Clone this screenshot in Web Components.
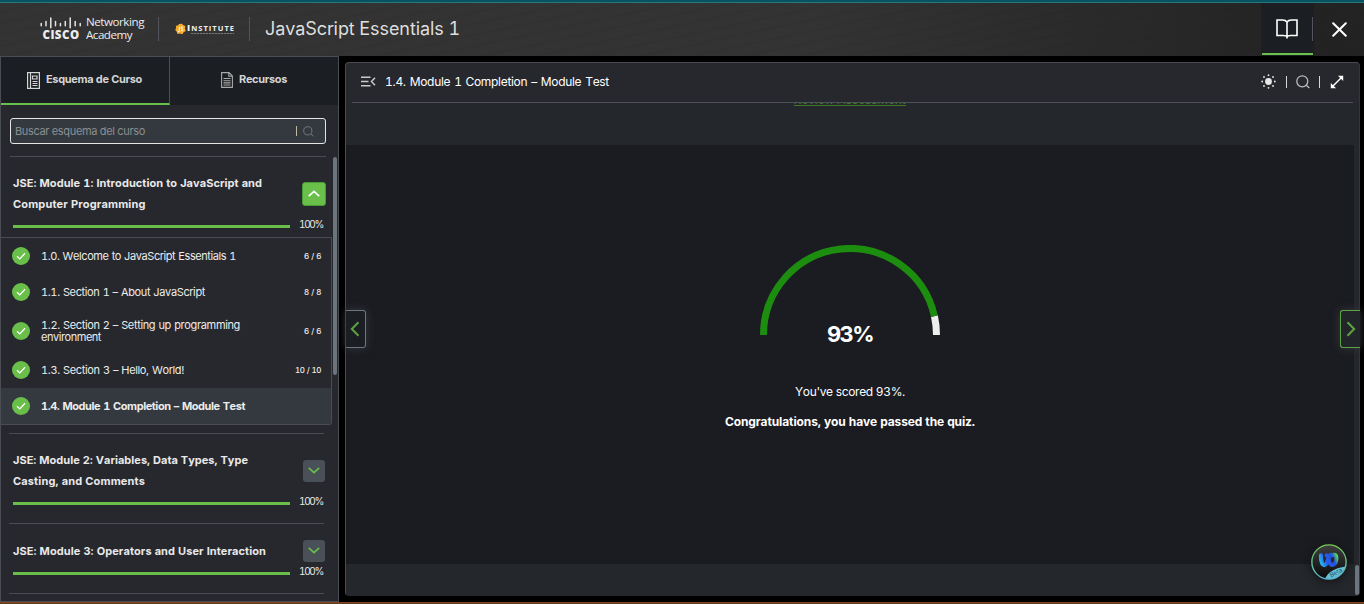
<!DOCTYPE html>
<html lang="es">
<head>
<meta charset="utf-8">
<title>JavaScript Essentials 1</title>
<style>
html,body{margin:0;height:100%;background:#000;overflow:hidden}
body{font-family:Inter,"Liberation Sans",sans-serif;color:#e8e8e8}
</style>
</head>
<body>
<course-app></course-app>
<script>
function define(name, html, setup) {
  const t = document.createElement('template');
  t.innerHTML = '<style>*{box-sizing:border-box}svg{display:block;flex:none}</style>' + html;
  customElements.define(name, class extends HTMLElement {
    connectedCallback() {
      if (this.shadowRoot) return;
      this.attachShadow({mode: 'open'}).append(t.content.cloneNode(true));
      if (setup) setup(this, this.shadowRoot);
    }
  });
}

/* A run of text tracked to occupy a given measure. */
define('fit-text', `<style>:host{display:inline-block;white-space:nowrap}span{display:inline-block;font-variant-numeric:tabular-nums;font-kerning:none}</style><span><slot></slot></span>`,
  (el, root) => {
    const s = root.querySelector('span');
    const w = +el.getAttribute('w'), n = el.textContent.length;
    const d = (w - s.getBoundingClientRect().width) / n;
    s.style.letterSpacing = d.toFixed(3) + 'px';
  });

define('brand-cisco', `<style>
:host{display:flex;align-items:center;gap:4px;color:#ececec}
.mark{width:42px;display:flex;flex-direction:column;align-items:center}
.c{font:800 11.5px/11px "Open Sans",sans-serif;margin-top:0;display:flex;height:12px}
.n{font:400 11.6px/12.5px "Open Sans","Noto Sans",sans-serif}
.n fit-text{display:block}
</style>
<div class="mark"><svg width="42" height="12" viewBox="0 0 42 12" stroke="#e6e6e6" stroke-width="1.5" stroke-linecap="round"><path d="M1.2 6.6v2.2M6 4.6v4.2M10.8 1v9.8M15.5 4.6v4.2M20.4 6.6v2.2M25.3 4.6v4.2M30.2 1v9.8M35.2 4.6v4.2M40.2 6.6v2.2"/></svg>
<div class="c"><fit-text w="37">CISCO</fit-text></div></div>
<div class="n"><fit-text w="58">Networking</fit-text><fit-text w="46">Academy</fit-text></div>`);

define('brand-js', `<style>
:host{display:flex;align-items:center;gap:1px;color:#f1f1f1}
.t{font:700 7.5px/8px "Open Sans",sans-serif;padding-top:1px}
.t b{font-size:9px}
.u{height:1px;margin:1px 0 0 4px;width:43px;background:repeating-linear-gradient(90deg,#777 0 2px,#4b4b4b 2px 3px)}
</style>
<svg width="11" height="12" viewBox="0 0 11 12"><path d="M4 1 7 .8 8 2 10.3 3 10 5.5 10.8 8 8.6 9.2 7.4 11.2 5 10.5 2.5 11 1.8 8.8.2 7 1.2 5 .8 2.8 3 2.6z" fill="#f9ad2b"/><path d="M4.4 3.7v4.1q0 1-1.5.8M8 4.2q-2-.7-2 .7 0 .8 1 1 1.2.3 1 1.3-.3 1-2 .5" fill="none" stroke="#fff" stroke-width=".9"/></svg>
<div><div class="t"><fit-text w="48"><b>I</b>NSTITUTE</fit-text></div><div class="u"></div></div>`);

define('top-bar', `<style>
:host{display:flex;height:56px;align-items:stretch;border-top:2px solid #06545f;background:linear-gradient(#2c7480 0 1px,transparent 1px),repeating-linear-gradient(168deg,transparent 0 9px,rgba(0,0,0,.035) 9px 11px),linear-gradient(90deg,#333 0,#333 60%,#232323 96%)}
.left{display:flex;align-items:center;flex:1;padding:0 0 1px 40px}
i{width:1px;height:24px;background:#53545c;flex:none}
brand-cisco{width:105px;margin-right:13px}
brand-js{width:59px;margin:0 15px 0 16px}
h1{margin:0 0 0 15px;font:400 18px/22px Inter,sans-serif;color:#dedede}
.book{width:53px;margin-top:1px;background:#1b1e22;display:flex;align-items:center;position:relative;padding-left:15px;padding-bottom:2px}
.book i{margin-left:14px;margin-top:1px}
.book::after{content:"";position:absolute;left:1px;right:1px;bottom:1px;height:2px;background:#6abf4b}
.x{width:50px;display:flex;align-items:center;padding-left:18px}
</style>
<div class="left"><brand-cisco></brand-cisco><i></i><brand-js></brand-js><i></i><h1><fit-text w="195">JavaScript Essentials 1</fit-text></h1></div>
<div class="book"><svg width="22" height="20" viewBox="0 0 22 20" fill="none" stroke="#fff" stroke-width="1.6"><path d="M11 3C10 1.5 8 1 6.5 1H1v15.5h6.5c1.800 0 3 .5 3.500 1.500.5-1 1.700-1.500 3.500-1.500H21V1h-5.500C14 1 12 1.500 11 3v16.500"/></svg><i></i></div>
<div class="x"><svg width="15" height="15" viewBox="0 0 15 15" stroke="#fff" stroke-width="2" stroke-linecap="round"><path d="M1.200 1.200l12.600 12.600M13.800 1.200 1.200 13.800"/></svg></div>`);

define('side-tabs', `<style>
:host{display:grid;grid-template-columns:169px 1fr;height:48px;background:#1b1e22;font:700 11px/14px Inter,sans-serif;color:#d4d4d4}
div{display:flex;align-items:center;gap:6px;padding-left:26px}
fit-text{padding-bottom:2px}
.a{border-right:1px solid #4c4f57;border-bottom:2px solid #6abf4b}
.b{padding-left:51px;padding-bottom:2px}
</style>
<div class="a"><svg width="13" height="17" viewBox="0 0 13 17" fill="none" stroke="#d6d6d6" stroke-width="1.200"><rect x=".6" y=".6" width="11.800" height="15.800"/><path d="M3.500.6v15.800M5.500 4h4.500v3H5.500zM5.500 9.500h5M5.500 11.500h5M5.500 13.500h5"/></svg><fit-text w="96">Esquema de Curso</fit-text></div>
<div class="b"><svg width="12" height="16" viewBox="0 0 12 16" fill="none" stroke="#aaa" stroke-width="1.100"><path d="M.6.6H8L11.400 4v11.400H.6zM7.800.6v3.600h3.600M2.500 6.500h7M2.500 8.700h7M2.500 10.900h7M2.500 13h7"/></svg><fit-text w="48">Recursos</fit-text></div>`);

define('search-box', `<style>
:host{display:flex;align-items:center;height:26px;border:1px solid #e4e4e4;border-radius:3px;background:#343940;padding:0 11px 0 4px;font:400 11px/14px Inter,sans-serif;color:#8b8e91}
span{flex:1}i{width:1px;height:10px;background:#bdb9a5;margin-right:6px}
</style><span><fit-text w="130">Buscar esquema del curso</fit-text></span><i></i><svg width="11" height="11" viewBox="0 0 11 11" fill="none" stroke="#74787c"><circle cx="4.800" cy="4.800" r="4.100"/><path d="M8 8l2.500 2.300"/></svg>`);

define('module-head', `<style>
:host{display:block;height:81px;border-top:1px solid #4a4c53;padding:16px 0 0 4px}
:host([short]){height:70px}
.r{display:grid;grid-template-columns:1fr 21px;height:42px;align-items:center}
:host([open]) .r{grid-template-columns:1fr 24px}
:host([short]) .r{height:22px}
.t{font:700 11px/21px Inter,sans-serif;color:#e9e9e9}
.btn{width:22px;height:22px;border-radius:3px;background:#495057;display:flex;align-items:center;justify-content:center;color:#6abf4b;margin:-1px 0 0}
:host([open]) .btn{width:24px;height:24px;background:#6abf4b;border:1px solid #479a35;color:#fff}
:host([open]) svg{transform:rotate(180deg)}
.p{display:flex;align-items:center;height:20px;font:400 10px/14px Inter,sans-serif;gap:9px;margin-top:-1px;padding-top:1px}
:host([short]) .p{height:20px;margin-top:0;padding-top:0}
.p fit-text{margin-top:-2px}
.bar{width:277px;height:3px;background:#6abf4b;margin-top:3px}
</style>
<div class="r"><div class="t"><slot></slot></div><div class="btn"><svg width="12" height="7" viewBox="0 0 12 7" fill="none" stroke="currentColor" stroke-width="1.600"><path d="M.8.8 6 5.600 11.200.8"/></svg></div></div>
<div class="p"><div class="bar"></div><fit-text w="24">100%</fit-text></div>`);

define('lesson-row', `<style>
:host{display:grid;grid-template-columns:29px 1fr auto;align-items:center;height:36px;padding:0 10px 0 11px;font:400 11px/12px Inter,sans-serif;color:#ececec;word-spacing:.6px}
:host([tall]){height:42px}
:host([on]){background:#343940;font-weight:700}
.n{font:500 8px/10px Inter,sans-serif}
</style>
<svg width="18" height="18" viewBox="0 0 18 18"><circle cx="9" cy="9" r="9" fill="#6abf4b"/><path d="M5 9.300 7.800 11.900 13 6.300" fill="none" stroke="#fff" stroke-width="1.300"/></svg>
<div><slot></slot></div><div class="n"><slot name="n"></slot></div>`);

define('side-bar', `<style>
:host{display:flex;flex-direction:column;border:1px solid #4a4c53;background:#27282d;height:546px;overflow:hidden}
side-tabs{flex:none}
search-box{margin:13px 12px 12px 9px;flex:none}
.s{display:flex;height:445px}
.l{width:332px}
module-head{margin:0 9px 0 8px}
module-head[open]{margin:0 7px 0 9px;padding-left:3px}
.g{border:1px solid #4a4c53;border-left:0;border-radius:0 0 3px 0;width:331px;height:188px;margin-bottom:8px;overflow:hidden}
.end{height:1px;background:#4a4c53;margin:0 9px 0 8px}
.bar{width:4px;height:218px;margin-top:1px;background:#6c757d;border-radius:3px}
</style>
<side-tabs></side-tabs><search-box></search-box>
<div class="s"><div class="l">
<module-head open><fit-text w="249">JSE: Module 1: Introduction to JavaScript and</fit-text><br><fit-text w="132.500">Computer Programming</fit-text></module-head>
<div class="g">
<lesson-row><fit-text w="195">1.0. Welcome to JavaScript Essentials 1</fit-text><fit-text slot="n" w="17">6 / 6</fit-text></lesson-row>
<lesson-row><fit-text w="164">1.1. Section 1 – About JavaScript</fit-text><fit-text slot="n" w="17">8 / 8</fit-text></lesson-row>
<lesson-row tall><fit-text w="199">1.2. Section 2 – Setting up programming</fit-text><br><fit-text w="60">environment</fit-text><fit-text slot="n" w="17">6 / 6</fit-text></lesson-row>
<lesson-row><fit-text w="143">1.3. Section 3 – Hello, World!</fit-text><fit-text slot="n" w="26">10 / 10</fit-text></lesson-row>
<lesson-row on><fit-text w="204">1.4. Module 1 Completion – Module Test</fit-text></lesson-row>
</div>
<module-head style="height:90px"><fit-text w="235">JSE: Module 2: Variables, Data Types, Type</fit-text><br><fit-text w="132">Casting, and Comments</fit-text></module-head>
<module-head short><fit-text w="253">JSE: Module 3: Operators and User Interaction</fit-text></module-head>
<div class="end"></div>
</div><div class="bar"></div></div>`);

define('panel-head', `<style>
:host{display:flex;align-items:center;height:40px;margin:0 6px;border-bottom:1px solid #4f5159;padding:0 9px 2px 9px;font:400 12px/16px Inter,sans-serif;color:#fff;word-spacing:1px}
.t{flex:1;margin-left:9px}i{width:1px;height:12px;background:#d6d6d6}
</style>
<svg width="15" height="11" viewBox="0 0 15 11" fill="none" stroke="#c9c9c9" stroke-width="1.500"><path d="M0 1.200h9.500M0 5.500h7.500M0 9.800h9.500M14 1.800 10.500 5.500 14 9.200"/></svg>
<div class="t"><fit-text w="224">1.4. Module 1 Completion – Module Test</fit-text></div>
<svg width="15" height="15" viewBox="0 0 15 15" fill="#e8e8e8"><circle cx="7.500" cy="7.500" r="3.400"/><circle cx="7.500" cy="1.200" r=".9"/><circle cx="7.500" cy="13.800" r=".9"/><circle cx="1.200" cy="7.500" r=".9"/><circle cx="13.800" cy="7.500" r=".9"/><circle cx="3" cy="3" r=".9"/><circle cx="12" cy="3" r=".9"/><circle cx="3" cy="12" r=".9"/><circle cx="12" cy="12" r=".9"/></svg>
<i style="margin:0 9px 0 10px"></i>
<svg width="14" height="14" viewBox="0 0 14 14" fill="none" stroke="#b9b9b9" stroke-width="1.300"><circle cx="6.300" cy="6.300" r="5.500"/><path d="M10.300 10.300 13.300 13"/></svg>
<i style="margin:0 10px 0 9px"></i>
<svg width="14" height="14" viewBox="0 0 14 14"><path d="M2 12 12 2" stroke="#fff" stroke-width="1.500"/><path d="M8 .8h5.200V6zM.8 8v5.200H6z" fill="#fff"/></svg>`);

define('score-gauge', `<style>
:host{display:grid;width:180px;height:103px;justify-items:center}
svg,b{grid-area:1/1}b{align-self:end;font:700 22px/28px Inter,sans-serif;color:#fff}
</style>
<svg width="180" height="90" viewBox="0 0 180 90" fill="none" stroke-width="7"><path d="M174.420 71.130A86.500 86.500 0 0 1 176.500 90" stroke="#eee"/><path d="M3.500 90A86.500 86.500 0 0 1 174.420 71.130" stroke="#1d8d10"/></svg>
<b><fit-text w="46">93%</fit-text></b>`);

define('nav-arrow', `<style>
:host{position:absolute;top:247px;width:20px;height:38px;display:flex;align-items:center;justify-content:center;border:1px solid #70757c;border-radius:0 3px 3px 0;background:#1b1e22;box-shadow:0 0 8px #363a40;left:0;border-left:0;padding-right:2px}
:host([next]){left:auto;right:-1px;border:1px solid #5da342;border-right:0;border-radius:3px 0 0 3px;background:#222529;padding:0}
:host([next]) svg{transform:scaleX(-1)}
</style><svg width="10" height="16" viewBox="0 0 10 16" fill="none" stroke="#5da342" stroke-width="2"><path d="M8.500 1.200 1.800 8l6.700 6.800"/></svg>`);

define('assistant-badge', `<style>:host{position:absolute;right:12px;bottom:15px;border-radius:50%;box-shadow:0 1px 8px #111}</style>
<svg width="36" height="36" viewBox="0 0 37 37"><defs><linearGradient id="r" x1="0" y1="0" x2="0" y2="1"><stop stop-color="#74c950"/><stop offset="1" stop-color="#58b6d4"/></linearGradient><linearGradient id="d" x1="0" y1="0" x2="0" y2="1"><stop stop-color="#3f3f3f"/><stop offset="1" stop-color="#090909"/></linearGradient><linearGradient id="w" gradientUnits="userSpaceOnUse" x1="8" y1="20" x2="27" y2="12"><stop stop-color="#2ad1ec"/><stop offset=".4" stop-color="#245df0"/><stop offset=".75" stop-color="#2450dd"/><stop offset="1" stop-color="#55dc5c"/></linearGradient><clipPath id="k"><circle cx="18.500" cy="18.500" r="17.500"/></clipPath></defs>
<circle cx="18.500" cy="18.500" r="17.500" fill="url(#d)"/><path clip-path="url(#k)" d="M14 37Q18 25 37 23V37z" fill="#64bfd6"/><circle cx="18.500" cy="18.500" r="17.600" fill="none" stroke="url(#r)" stroke-width="1.400"/>
<path d="M10.200 11.500C10 19 12 22.500 14.500 21.500 18 20 17 11.500 20.500 11 M16 11.500C18.500 11.500 18 21.500 21.500 21.500 25 21.500 26.500 17 26 13.500 25.500 10.500 23 10.500 21.500 12" fill="none" stroke="url(#w)" stroke-width="4.200" stroke-linecap="round"/>
<text x="20.500" y="34.500" font-family="Open Sans" font-size="6.500" fill="#24505c" transform="rotate(-27 20.500 34.500)">Beta</text></svg>`);

define('content-panel', `<style>
:host{display:flex;flex-direction:column;position:relative;width:1015px;height:534px;border:1px solid #484b53;border-right-color:#34363c;border-bottom-color:#24272b;border-radius:4px;background:#27282d}
.body{flex:1;display:flex;flex-direction:column;background:#24272b;overflow:hidden}
.prev{display:flex;justify-content:center;align-items:flex-start;height:42px;flex:none;overflow:hidden;padding-right:6px;font:400 12px/14px Inter,sans-serif;color:#3b7a23}
.prev fit-text{margin-top:-12px;border-bottom:1px solid #3b7a23;height:15px;line-height:18px}
.q{height:419px;flex:none;width:1008px;background:#1b1c21;display:flex;flex-direction:column;align-items:center;padding-top:100px;font:400 12px/16px Inter,sans-serif;color:#fff}
p{margin:36px 0 0}p+p{margin-top:14px;font-weight:700}
.bar{position:absolute;right:0;bottom:0;width:4px;height:30px;border-radius:3px;background:#6c757d}
</style>
<panel-head></panel-head>
<div class="body"><div class="prev"><fit-text w="112">Review Assessment</fit-text></div>
<div class="q"><score-gauge></score-gauge><p><fit-text w="110">You've scored 93%.</fit-text></p><p><fit-text w="250">Congratulations, you have passed the quiz.</fit-text></p></div></div>
<nav-arrow></nav-arrow><nav-arrow next></nav-arrow><div class="bar"></div><assistant-badge></assistant-badge>`);

define('course-app', `<style>
:host{display:grid;grid-template:56px 546px 2px/339px 1fr;height:604px;width:1364px;background:#000}
top-bar,.foot{grid-column:1/-1}.foot{background:linear-gradient(#8a4b22,#5b351d)}
content-panel{margin:6px 0 0 6px}
</style><top-bar></top-bar><side-bar></side-bar><content-panel></content-panel><div class="foot"></div>`);
</script>
</body>
</html>
